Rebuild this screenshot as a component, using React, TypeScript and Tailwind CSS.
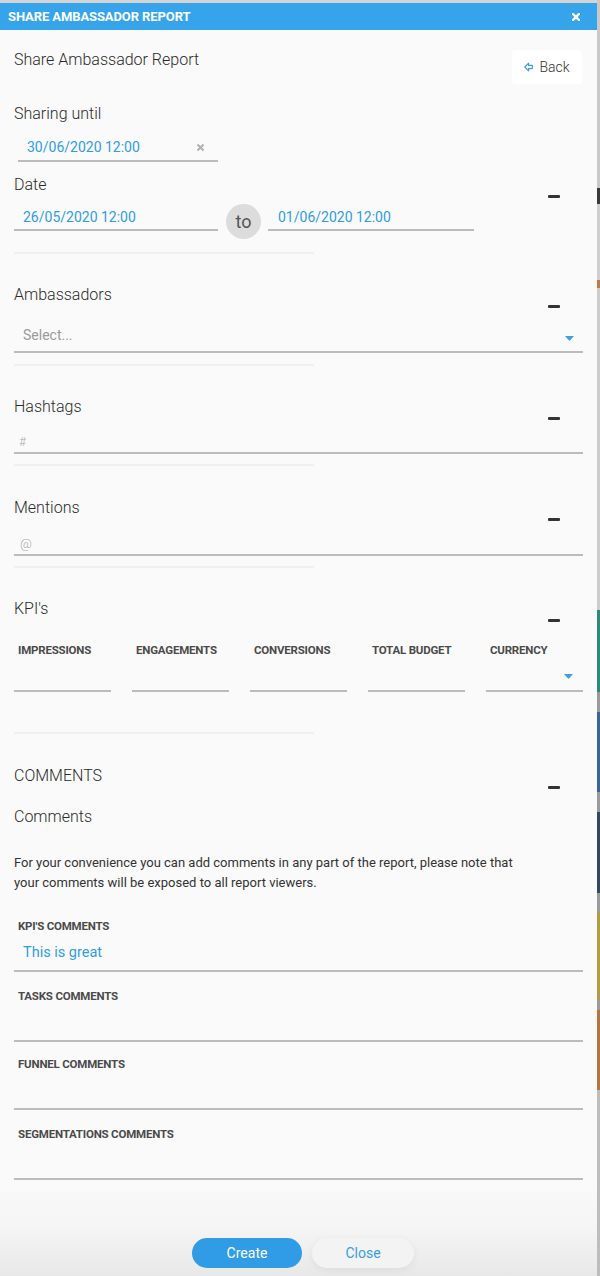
import React from "react";

const BLUE = "#2f9de6";

function Minus() {
  return <span className="mr-[23px] block h-[3px] w-[12px] translate-y-[11px] rounded-[1px] bg-[#333]" />;
}

function SectionTitle({ children, toggle = true }: { children: React.ReactNode; toggle?: boolean }) {
  return (
    <div className="flex h-[20px] items-center justify-between">
      <span className="text-[16px] font-light leading-[20px] text-[#2b2b2b]">{children}</span>
      {toggle && <Minus />}
    </div>
  );
}

function Caret() {
  return (
    <svg width="9" height="5" viewBox="0 0 9 5" className="block">
      <path d="M0 0 H9 L4.5 5 Z" fill="#3a9fe6" />
    </svg>
  );
}

function Separator({ className }: { className: string }) {
  return <div className={`h-[2px] w-[300px] bg-[#f0f0f0] ${className}`} />;
}

function FieldLabel({ children, className }: { children: React.ReactNode; className: string }) {
  return (
    <div className={`pl-[4px] text-[11.5px] font-bold uppercase leading-[16px] tracking-[-0.2px] text-[#4a4a4a] ${className}`}>
      {children}
    </div>
  );
}

const kpis = ["Impressions", "Engagements", "Conversions", "Total budget", "Currency"];

const strip = [
  { h: 188, c: "bg-[#c9c9c9]" },
  { h: 16, c: "bg-[#3a3a3a]" },
  { h: 76, c: "bg-[#cfcfcf]" },
  { h: 8, c: "bg-[#c07a45]" },
  { h: 322, c: "bg-[#cdcdcd]" },
  { h: 82, c: "bg-[#2b8a78]" },
  { h: 20, c: "bg-[#9a9a9a]" },
  { h: 80, c: "bg-[#36689e]" },
  { h: 20, c: "bg-[#9a9a9a]" },
  { h: 81, c: "bg-[#34495e]" },
  { h: 20, c: "bg-[#9a9a9a]" },
  { h: 87, c: "bg-[#b39a43]" },
  { h: 10, c: "bg-[#9a9a9a]" },
  { h: 80, c: "bg-[#b8733a]" },
  { h: 186, c: "bg-[#bdbdbd]" },
];

export default function App() {
  return (
    <div className="flex h-[1276px] w-[600px] overflow-hidden bg-[#d4d4d4] font-['Roboto',sans-serif]">
      {/* Modal */}
      <div className="flex w-[597px] flex-col pt-[3px]">
        <div className="flex h-[27px] items-center justify-between bg-[#35a4eb] pl-[8px] pr-[17px]">
          <span className="text-[13px] font-bold tracking-[-0.1px] text-white">SHARE AMBASSADOR REPORT</span>
          <svg width="8" height="8" viewBox="0 0 8 8">
            <path d="M1 1 L7 7 M7 1 L1 7" stroke="white" strokeWidth="2.4" strokeLinecap="square" />
          </svg>
        </div>

        <div className="flex flex-1 flex-col bg-[#fafafa]">
          <div className="flex flex-col px-[14px]">
            {/* Top row */}
            <div className="mt-[20px] flex items-start justify-between">
              <span className="text-[16px] font-light leading-[20px] text-[#2b2b2b]">Share Ambassador Report</span>
              <button className="mr-[1px] flex h-[34px] w-[70px] items-center justify-center gap-[6px] rounded-[4px] bg-white text-[14px] font-light text-[#333]">
                <svg width="9" height="10" viewBox="0 0 9 10">
                  <path d="M0.8 5 L4.6 1.2 V3.4 H8.3 V6.6 H4.6 V8.8 Z" fill="none" stroke="#3a9fe6" strokeWidth="1.2" strokeLinejoin="round" />
                </svg>
                Back
              </button>
            </div>

            {/* Sharing until */}
            <div className="mt-[20px]">
              <SectionTitle toggle={false}>Sharing until</SectionTitle>
            </div>
            <div className="ml-[4px] mt-[13px] flex w-[200px] items-center justify-between border-b-2 border-[#bbb] pb-[3px] pl-[9px] pr-[13px]">
              <span className="text-[14px] leading-[20px]" style={{ color: BLUE }}>30/06/2020 12:00</span>
              <svg width="9" height="9" viewBox="0 0 9 9">
                <path d="M1.5 1.5 L7.5 7.5 M7.5 1.5 L1.5 7.5" stroke="#b0b0b0" strokeWidth="2" />
              </svg>
            </div>

            {/* Date */}
            <div className="mt-[13px]">
              <SectionTitle>Date</SectionTitle>
            </div>
            <div className="mt-[9px] flex items-start">
              <div className="w-[204px] border-b-2 border-[#bbb] pb-[2px] pl-[9px] pt-[3px] text-[14px] leading-[20px]" style={{ color: BLUE }}>
                26/05/2020 12:00
              </div>
              <div className="ml-[8px] flex h-[35px] w-[35px] items-center justify-center rounded-full bg-[#dcdcdc] text-[18px] text-[#555]">
                to
              </div>
              <div className="ml-[7px] w-[206px] border-b-2 border-[#bbb] pb-[2px] pl-[10px] pt-[3px] text-[14px] leading-[20px]" style={{ color: BLUE }}>
                01/06/2020 12:00
              </div>
            </div>
            <Separator className="mt-[13px]" />

            {/* Ambassadors */}
            <div className="mt-[31px]">
              <SectionTitle>Ambassadors</SectionTitle>
            </div>
            <div className="mt-[20px] flex items-center justify-between border-b-2 border-[#bbb] pb-[6px] pl-[9px] pr-[9px]">
              <span className="text-[14px] leading-[20px] text-[#9a9a9a]">Select...</span>
              <span className="translate-y-[3px]"><Caret /></span>
            </div>
            <Separator className="mt-[11px]" />

            {/* Hashtags */}
            <div className="mt-[31px]">
              <SectionTitle>Hashtags</SectionTitle>
            </div>
            <div className="mt-[15px] border-b-2 border-[#bbb] pl-[5px] text-[12px] font-light leading-[20px] text-[#aaa]">#</div>
            <Separator className="mt-[10px]" />

            {/* Mentions */}
            <div className="mt-[32px]">
              <SectionTitle>Mentions</SectionTitle>
            </div>
            <div className="mt-[16px] border-b-2 border-[#bbb] pl-[6px] text-[13px] font-light leading-[20px] text-[#aaa]">@</div>
            <Separator className="mt-[10px]" />

            {/* KPI's */}
            <div className="mt-[31px]">
              <SectionTitle>KPI's</SectionTitle>
            </div>
            <div className="mt-[23px] grid grid-cols-5 gap-x-[21px]">
              {kpis.map((k, i) => (
                <div key={k} className="flex flex-col">
                  <FieldLabel className="">{k}</FieldLabel>
                  <div className="flex h-[34px] items-center justify-end border-b-2 border-[#bbb] pr-[10px]">
                    {i === 4 && <span className="translate-y-[2px]"><Caret /></span>}
                  </div>
                </div>
              ))}
            </div>
            <Separator className="mt-[40px]" />

            {/* Comments */}
            <div className="mt-[32px]">
              <SectionTitle>COMMENTS</SectionTitle>
            </div>
            <div className="mt-[21px] text-[16px] font-light leading-[20px] text-[#2b2b2b]">Comments</div>
            <p className="mt-[26px] max-w-[515px] text-[13px] leading-[20px] text-[#333]">
              For your convenience you can add comments in any part of the report, please note that your comments will be exposed to all report viewers.
            </p>

            <FieldLabel className="mt-[25px]">KPI's comments</FieldLabel>
            <div className="border-b-2 border-[#bbb] pb-[7px] pl-[9px] pt-[9px] text-[14.5px] leading-[20px]" style={{ color: BLUE }}>
              This is great
            </div>

            <FieldLabel className="mt-[16px]">Tasks comments</FieldLabel>
            <div className="h-[38px] border-b-2 border-[#bbb]" />

            <FieldLabel className="mt-[14px]">Funnel comments</FieldLabel>
            <div className="h-[38px] border-b-2 border-[#bbb]" />

            <FieldLabel className="mt-[16px]">Segmentations comments</FieldLabel>
            <div className="h-[38px] border-b-2 border-[#bbb]" />
          </div>

          {/* Footer */}
          <div className="flex flex-1 items-end justify-center gap-[10px] bg-gradient-to-b from-[#fafafa] via-[#f5f5f5] to-[#e8e8e8] pb-[8px] pl-[9px]">
            <button className="h-[30px] w-[110px] rounded-[15px] bg-[#2f9ce5] text-[14px] text-white">Create</button>
            <button className="h-[30px] w-[102px] rounded-[15px] bg-[#f3f3f3] text-[14px] text-[#3a9de0] shadow-[0_2px_8px_rgba(0,0,0,0.06)]">
              Close
            </button>
          </div>
        </div>
      </div>

      {/* Page behind the modal */}
      <div className="flex w-[3px] flex-col">
        {strip.map((s, i) => (
          <div key={i} className={`${s.c} shrink-0`} style={{ height: s.h }} />
        ))}
      </div>
    </div>
  );
}
